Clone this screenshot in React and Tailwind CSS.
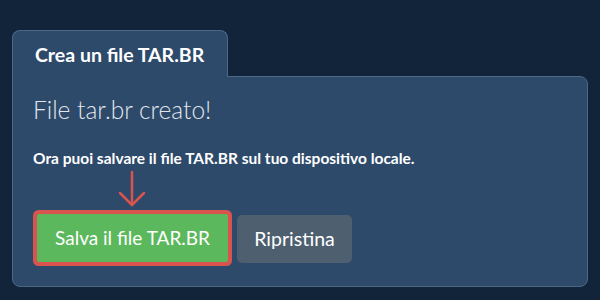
import React from "react";

function DownArrow() {
  return (
    <svg
      width="28"
      height="46"
      viewBox="0 0 28 46"
      className="block ml-[85px]"
      fill="none"
      stroke="#d9534f"
      strokeWidth="2.5"
      strokeLinecap="round"
      strokeLinejoin="round"
    >
      <line x1="14" y1="4" x2="14" y2="37" />
      <polyline points="2,25 14,37 26,25" />
    </svg>
  );
}

export default function App() {
  return (
    <div
      className="w-[600px] h-[300px] bg-[#11243a] pt-[30px] px-[12px] overflow-hidden"
      style={{ fontFamily: "Lato, 'Noto Sans', sans-serif" }}
    >
      {/* onglet */}
      <div className="relative z-10 -mb-px w-[216px] h-[47px] bg-[#2d4a6a] border border-b-0 border-[#4d6785] rounded-t-lg pl-[22px] pt-[12px]">
        <h2 className="text-[19.5px] leading-[24px] font-bold text-white">
          Crea un file TAR.BR
        </h2>
      </div>

      {/* panneau */}
      <div className="w-[576px] h-[211px] bg-[#2d4a6a] border border-[#4d6785] rounded-b-lg rounded-tr-lg pl-[20px] pt-[18px]">
        <h3 className="text-[24.5px] leading-[29px] font-light text-[#e2e7ee]">
          File tar.br creato!
        </h3>
        <p className="mt-[24px] text-[15.5px] leading-[20px] font-bold text-white">
          Ora puoi salvare il file TAR.BR sul tuo dispositivo locale.
        </p>
        <DownArrow />
        <div className="flex items-start ml-[4px]">
          <button className="w-[191px] h-[48px] bg-[#5cb85c] text-white text-[19px] rounded-[2px] ring-4 ring-[#d9534f] outline-none">
            Salva il file TAR.BR
          </button>
          <button className="ml-[9px] mt-px w-[115px] h-[48px] bg-[#4e5f70] text-white text-[19.5px] rounded-[5px]">
            Ripristina
          </button>
        </div>
      </div>
    </div>
  );
}
